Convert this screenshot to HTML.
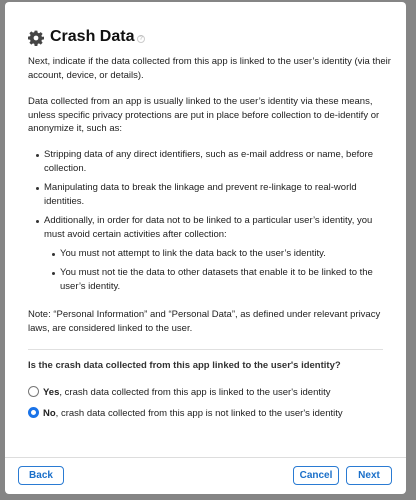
<!DOCTYPE html>
<html><head><meta charset="utf-8"><style>
*{margin:0;padding:0;box-sizing:border-box}
body{width:416px;height:500px;overflow:hidden;background:#858585;font-family:"Liberation Sans",Arial,sans-serif;color:#222;position:relative}
.modal{position:absolute;left:5px;top:2px;width:401px;height:492px;background:#fff;border-radius:4px}
.t{position:absolute;left:23px;font-size:9.5px;line-height:13.5px;width:370px;white-space:nowrap}
h1{position:absolute;left:45px;top:26px;font-size:16px;font-weight:bold;color:#111}
.q{position:absolute;left:132px;top:33px;width:8px;height:8px;border-radius:50%;border:1px solid #ccc;font-size:6px;color:#aaa;text-align:center;line-height:7px}
.dot{position:absolute;width:3px;height:3px;border-radius:50%;background:#333}
.hr{position:absolute;left:23px;top:347px;width:355px;height:1px;background:#e0e0e0}
.foot{position:absolute;left:0;top:455px;width:401px;height:1px;background:#ddd}
.btn{position:absolute;top:464px;height:19px;border:1px solid #2a7bd3;border-radius:4px;color:#1a6fc9;font-size:10px;font-weight:bold;text-align:center;line-height:17px;background:#fff}
.r{position:absolute;width:11px;height:11px;border-radius:50%;border:1px solid #777}
</style></head><body>
<div class="modal">
<svg style="position:absolute;left:23px;top:28px" width="16" height="16" viewBox="0 0 24 24"><path fill="#444" d="M10 1h4l.6 3.1 1.9.8 2.6-1.8 2.8 2.8-1.8 2.6.8 1.9L24 10v4l-3.1.6-.8 1.9 1.8 2.6-2.8 2.8-2.6-1.8-1.9.8L14 24h-4l-.6-3.1-1.9-.8-2.6 1.8-2.8-2.8 1.8-2.6-.8-1.9L0 14v-4l3.1-.6.8-1.9L2.1 4.9 4.9 2.1l2.6 1.8 1.9-.8z"/><circle cx="12" cy="12" r="3.6" fill="#fff"/></svg>
<h1>Crash Data</h1><div class="q">?</div>
<div class="t" style="top:53px">Next, indicate if the data collected from this app is linked to the user’s identity (via their<br>account, device, or details).</div>
<div class="t" style="top:93px">Data collected from an app is usually linked to the user’s identity via these means,<br>unless specific privacy protections are put in place before collection to de-identify or<br>anonymize it, such as:</div>
<div class="dot" style="left:31px;top:152px"></div>
<div class="t" style="left:39px;top:146px">Stripping data of any direct identifiers, such as e-mail address or name, before<br>collection.</div>
<div class="dot" style="left:31px;top:185px"></div>
<div class="t" style="left:39px;top:179px">Manipulating data to break the linkage and prevent re-linkage to real-world<br>identities.</div>
<div class="dot" style="left:31px;top:218px"></div>
<div class="t" style="left:39px;top:212px">Additionally, in order for data not to be linked to a particular user’s identity, you<br>must avoid certain activities after collection:</div>
<div class="dot" style="left:47px;top:251px"></div>
<div class="t" style="left:55px;top:245px">You must not attempt to link the data back to the user’s identity.</div>
<div class="dot" style="left:47px;top:270px"></div>
<div class="t" style="left:55px;top:264px">You must not tie the data to other datasets that enable it to be linked to the<br>user’s identity.</div>
<div class="t" style="top:306px">Note: “Personal Information” and “Personal Data”, as defined under relevant privacy<br>laws, are considered linked to the user.</div>
<div class="hr"></div>
<div class="t" style="top:357px;font-weight:bold;color:#333">Is the crash data collected from this app linked to the user's identity?</div>
<div class="r" style="left:23px;top:384px"></div>
<div class="t" style="left:38px;top:384px"><b>Yes</b>, crash data collected from this app is linked to the user's identity</div>
<div class="r" style="left:23px;top:405px;border:3px solid #1a73e8;background:#fff"></div>
<div class="t" style="left:38px;top:405px"><b>No</b>, crash data collected from this app is not linked to the user's identity</div>
<div class="foot"></div>
<div class="btn" style="left:13px;width:46px">Back</div>
<div class="btn" style="left:288px;width:46px">Cancel</div>
<div class="btn" style="left:341px;width:46px">Next</div>
</div>
</body></html>
